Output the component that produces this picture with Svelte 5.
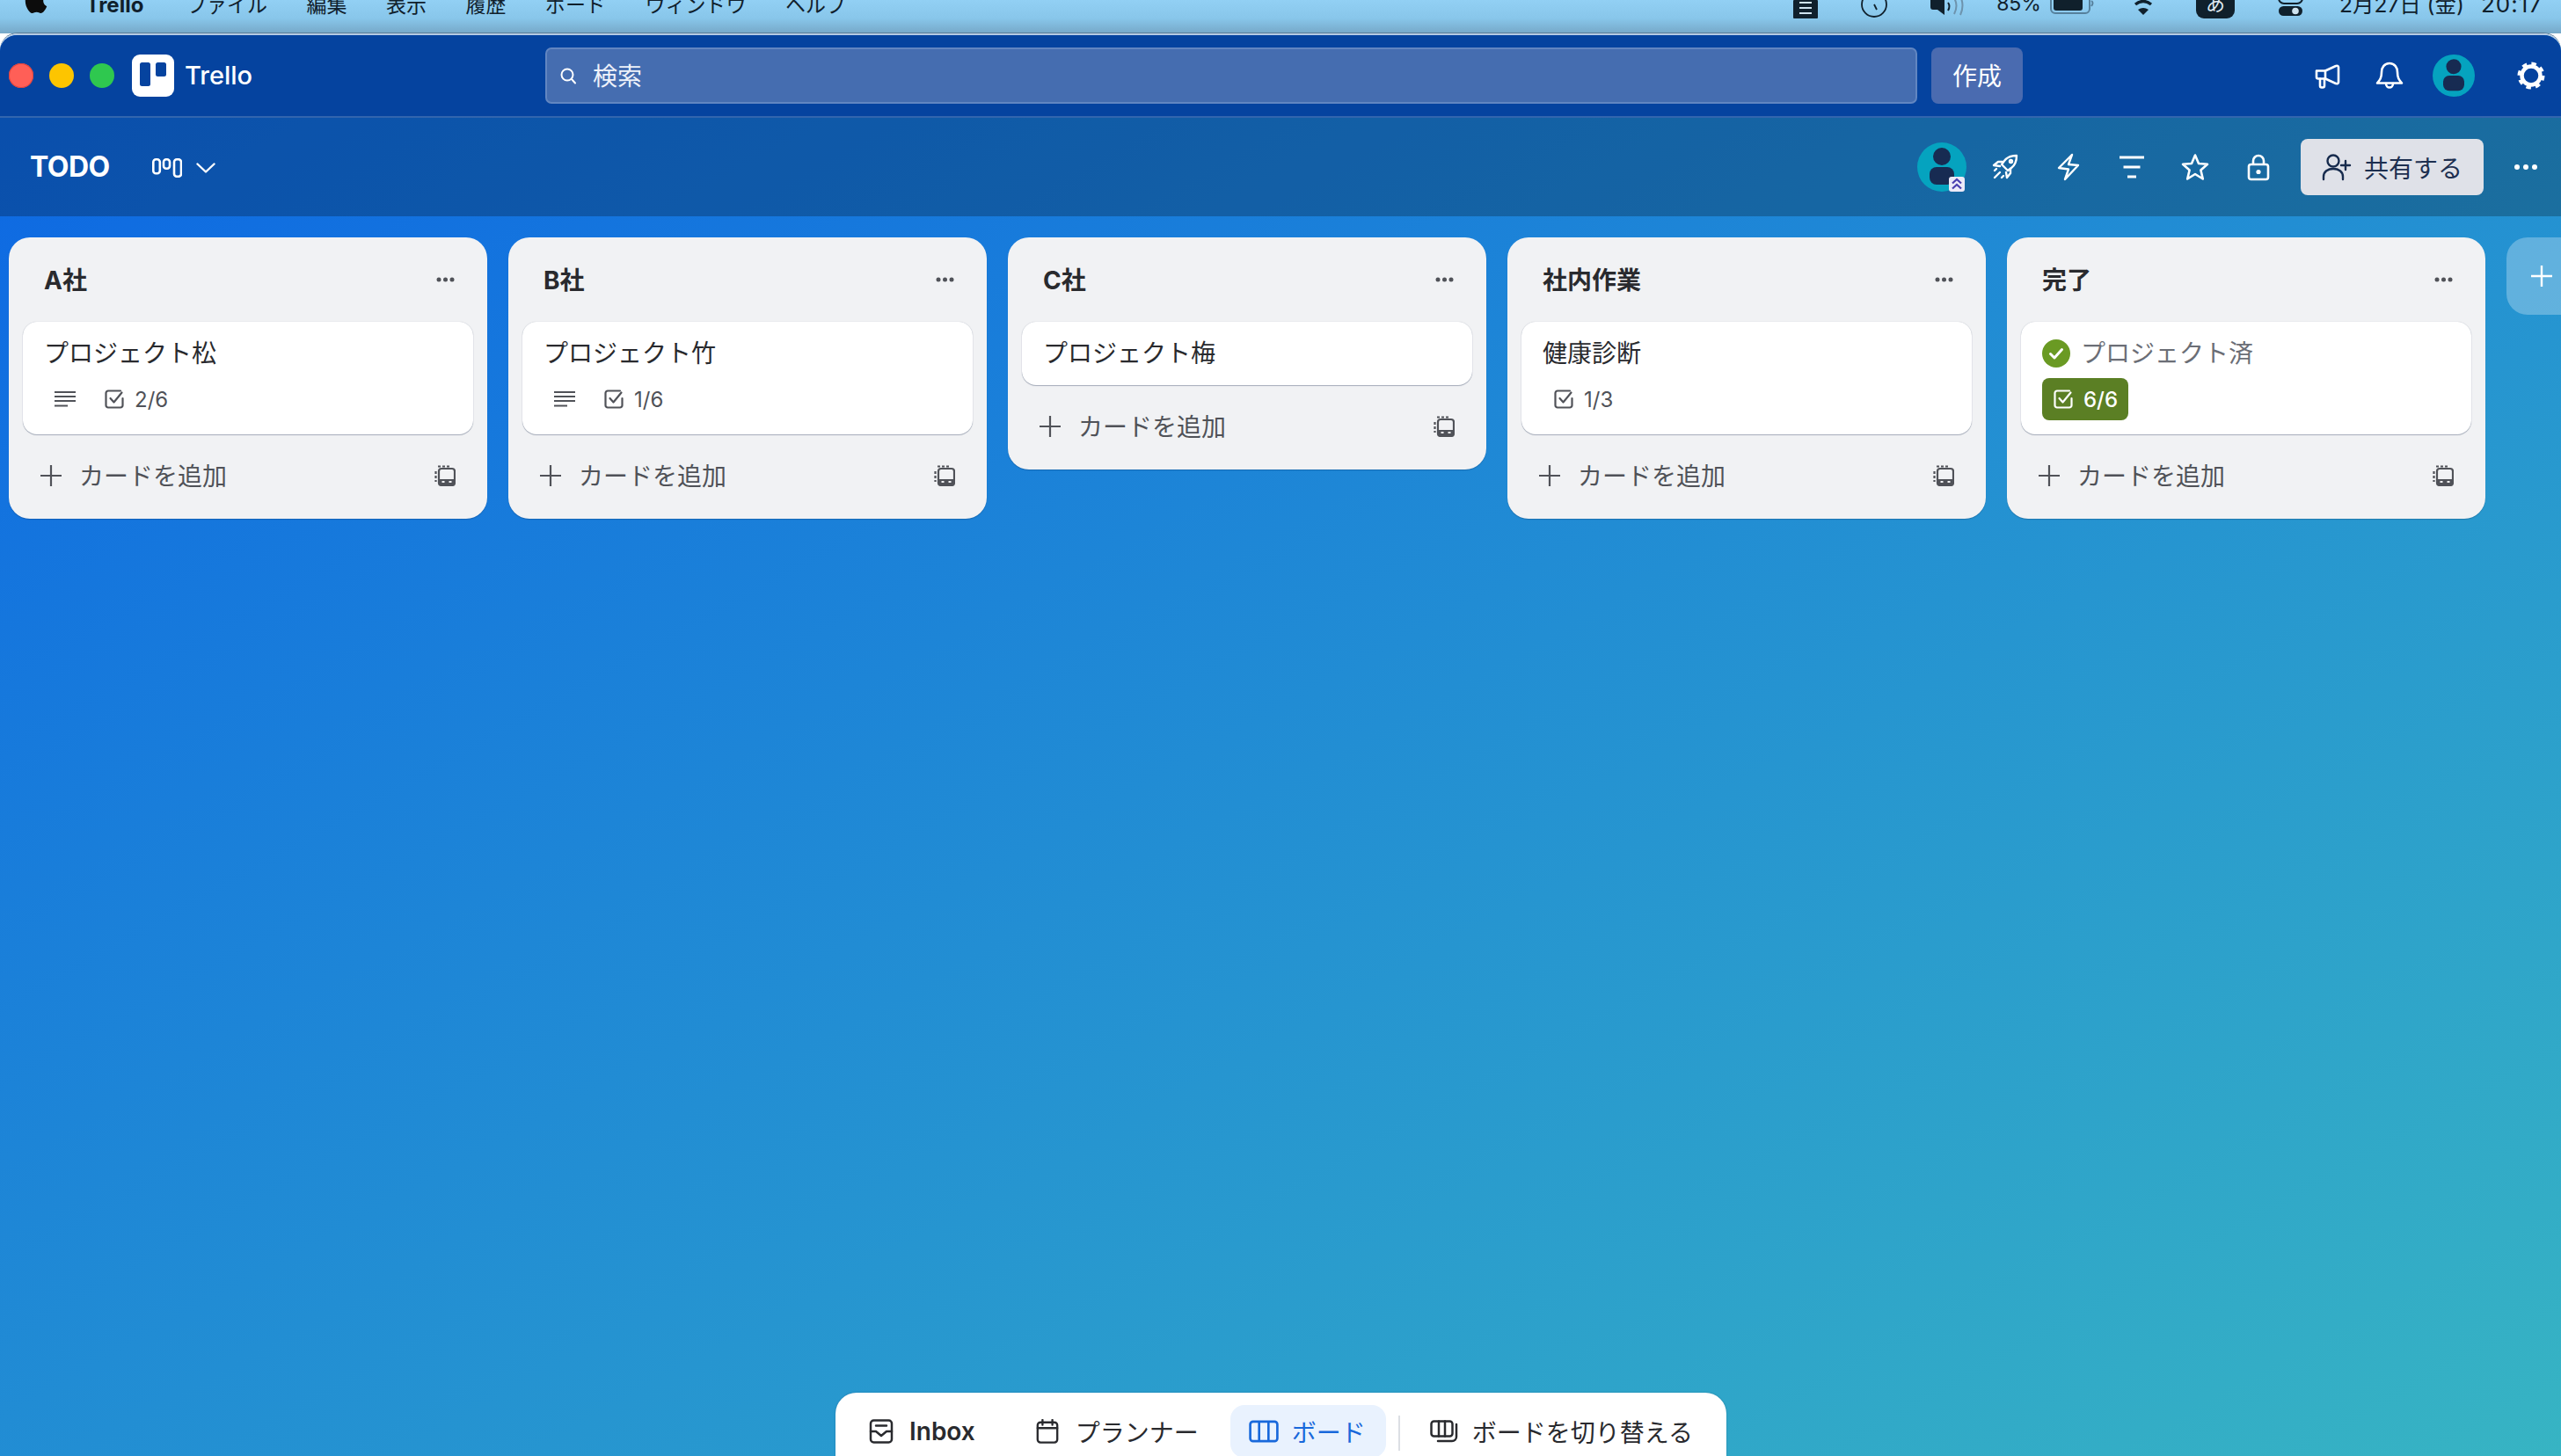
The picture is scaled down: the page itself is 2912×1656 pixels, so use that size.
<script>
  const lists = [
    { name: 'A社', cards: [{ title: 'プロジェクト松', desc: true, check: '2/6' }] },
    { name: 'B社', cards: [{ title: 'プロジェクト竹', desc: true, check: '1/6' }] },
    { name: 'C社', cards: [{ title: 'プロジェクト梅' }] },
    { name: '社内作業', cards: [{ title: '健康診断', check: '1/3' }] },
    { name: '完了', cards: [{ title: 'プロジェクト済', done: true, check: '6/6' }] }
  ];
  const menus = ['ファイル', '編集', '表示', '履歴', 'ボード', 'ウィンドウ', 'ヘルプ'];
</script>

{#snippet checkIcon()}
  <svg class="i24" viewBox="0 0 24 24" fill="none" stroke="currentColor" stroke-width="2.2" stroke-linecap="round" stroke-linejoin="round">
    <path d="M19 2.5H5A2.5 2.5 0 0 0 2.5 5v14A2.5 2.5 0 0 0 5 21.5h14a2.5 2.5 0 0 0 2.5-2.5v-8" />
    <path d="M7.5 11l4 4.5 9-11" />
  </svg>
{/snippet}

{#snippet person(size)}
  <svg class="avatar-svg" width={size} height={size} viewBox="0 0 56 56">
    <circle cx="28" cy="28" r="28" fill="#05a3bf" />
    <circle cx="28" cy="16" r="10" fill="#172b52" />
    <rect x="14" y="28" width="28" height="20" rx="8" fill="#172b52" />
  </svg>
{/snippet}

<div class="desk">
  <header class="menubar">
    <svg class="apple" viewBox="0 0 24 24" fill="#0c0c0c"><path d="M12.152 6.896c-.948 0-2.415-1.078-3.96-1.04-2.04.027-3.91 1.183-4.961 3.014-2.117 3.675-.546 9.103 1.519 12.09 1.013 1.454 2.208 3.09 3.792 3.039 1.52-.065 2.09-.987 3.935-.987 1.831 0 2.35.987 3.96.948 1.637-.026 2.676-1.48 3.676-2.948 1.156-1.688 1.636-3.325 1.662-3.415-.039-.013-3.182-1.221-3.22-4.857-.026-3.04 2.48-4.494 2.597-4.559-1.429-2.09-3.623-2.324-4.39-2.376-2-.156-3.675 1.09-4.61 1.09zM15.53 3.83c.843-1.012 1.4-2.427 1.245-3.83-1.207.052-2.662.805-3.532 1.818-.78.896-1.454 2.338-1.273 3.714 1.338.104 2.715-.688 3.559-1.701" /></svg>
    <span class="menu-app">Trello</span>
    {#each menus as m}<span class="menu-item">{m}</span>{/each}

    <div class="status">
      <svg class="st st-note" width="28" height="22" viewBox="0 0 28 22"><rect width="28" height="21" rx="1" fill="#10202c" /><path d="M7 3h14M7 9h14M7 15h14" stroke="#cfe3ef" stroke-width="2" /></svg>
      <svg class="st st-clock" width="30" height="22" viewBox="0 0 30 22" fill="none" stroke="#10202c" stroke-width="1.8"><circle cx="15" cy="5" r="14" /><path d="M15 5l3 6" /></svg>
      <svg class="st st-vol" width="39" height="22" viewBox="0 0 39 22" fill="none"><path d="M0 -4h8l8-6v27l-8-6H3a3 3 0 0 1-3-3z" fill="#10202c" /><path d="M20 3q3 4 0 9" stroke="#10202c" stroke-width="2" /><path d="M27 -2q5 8 0 18M34 -4q5 10 0 21" stroke="#6d93ad" stroke-width="2" /></svg>
      <span class="st-text st-pct">85%</span>
      <svg class="st st-batt" width="50" height="22" viewBox="0 0 50 22"><rect x="1" y="-10" width="44" height="25" rx="5" fill="none" stroke="#56809c" stroke-width="2" /><rect x="4" y="-8" width="33" height="20" rx="3" fill="#10202c" /><path d="M47 1q3 2 0 6" stroke="#56809c" stroke-width="2" fill="none" /></svg>
      <svg class="st st-wifi" width="34" height="22" viewBox="0 0 34 22" fill="none" stroke="#10202c" stroke-width="3.4"><path d="M1 -3q16-12 32 0M8 5q9-7 18 0" /><path d="M17 17l-6-6q6-4 12 0z" fill="#10202c" stroke="none" /></svg>
      <span class="st-ime">あ</span>
      <svg class="st st-toggle" width="27" height="22" viewBox="0 0 27 22"><rect y="-8" width="27" height="12" rx="6" fill="none" stroke="#10202c" stroke-width="2" /><rect y="7" width="27" height="11" rx="5.5" fill="#10202c" /><circle cx="19" cy="12.5" r="3.8" fill="#cfe3ef" /></svg>
      <span class="st-text st-date">2月27日 (金)</span>
      <span class="st-text st-time">20:17</span>
    </div>
  </header>

  <div class="window">
    <div class="titlebar">
      <div class="tb-left">
        <div class="lights">
          <span class="light red"></span><span class="light yellow"></span><span class="light green"></span>
        </div>
        <svg class="logo" viewBox="0 0 48 48"><rect width="48" height="48" rx="9" fill="#fff" /><rect x="9" y="9" width="12" height="27" rx="2.5" fill="#05439f" /><rect x="27" y="9" width="12" height="16" rx="2.5" fill="#05439f" /></svg>
        <span class="appname">Trello</span>
      </div>
      <div class="search">
        <svg class="i20" viewBox="0 0 20 20" fill="none" stroke="#fff" stroke-width="2" stroke-linecap="round"><circle cx="9" cy="9" r="6.5" /><path d="M14 14l4 4.5" /></svg>
        <span class="search-text">検索</span>
      </div>
      <button class="create"><span class="search-text">作成</span></button>
      <div class="tb-right">
        <svg class="ico" viewBox="0 0 32 32" fill="none" stroke="#fff" stroke-width="2.6" stroke-linejoin="round" stroke-linecap="round"><path d="M4 10.5h10L26 5a2 2 0 0 1 3 1.5v17a2 2 0 0 1-3 1.5l-12-5.5H6a2 2 0 0 1-2-2z" /><path d="M14 10.5v9M8 19.500v8a2 2 0 0 0 2 2h1a2 2 0 0 0 2-2v-8" /></svg>
        <svg class="ico" viewBox="0 0 32 32" fill="none" stroke="#fff" stroke-width="2.6" stroke-linejoin="round" stroke-linecap="round"><path d="M16 2c-6 0-9 5-9 10 0 7-2 9-5 12.500h28C27 21 25 19 25 12c0-5-3-10-9-10z" /><path d="M12 25c0 6 8 6 8 0" /></svg>
        <span class="tb-avatar">{@render person(48)}</span>
        <svg class="ico gear" viewBox="0 0 32 32" fill="none" stroke="#fff"><circle cx="16" cy="16" r="10.500" stroke-width="4.500" /><circle cx="16" cy="16" r="13.500" stroke-width="4" stroke-dasharray="5.400 5.200" /></svg>
      </div>
    </div>

    <div class="boardbar">
      <h1 class="board-title">TODO</h1>
      <svg class="view-ico" viewBox="0 0 34 22" fill="none" stroke="#fff" stroke-width="2.6"><rect x="1.300" y="1.300" width="7.500" height="16" rx="3" /><rect x="13" y="1.300" width="7" height="10.500" rx="3" /><rect x="25" y="1.300" width="8" height="19.500" rx="3" /></svg>
      <svg class="chev" viewBox="0 0 22 12" fill="none" stroke="#fff" stroke-width="2.400" stroke-linecap="round" stroke-linejoin="round"><path d="M1.500 1.500L11 10.500l9.500-9" /></svg>

      <div class="board-right">
        <span class="member">
          {@render person(56)}
          <span class="member-badge">
            <svg viewBox="0 0 18 17" fill="none" stroke="#4a3fb0" stroke-width="2.200"><path d="M4 7.500L9 3l5 4.500M4 13.500L9 9l5 4.500" /></svg>
          </span>
        </span>
        <svg class="ico" viewBox="0 0 32 32" fill="none" stroke="#fff" stroke-width="2.400" stroke-linejoin="round" stroke-linecap="round"><path d="M29 3c-6 0-11 2-14 6l-3 4 7 7 4-3c4-3 6-8 6-14z" /><path d="M13 10H8l-5 4 7 1M22 18v5l-4 5-1-6" /><circle cx="22.500" cy="9.500" r="1.500" /><path d="M10 22l-6 6M6 18l-2 2M14 26l-2 2" /></svg>
        <svg class="ico" viewBox="0 0 32 32" fill="none" stroke="#fff" stroke-width="2.400" stroke-linejoin="round" stroke-linecap="round"><path d="M20 2L5 17l11 1.500L12 30l15-16-11-1z" /></svg>
        <svg class="ico" viewBox="0 0 32 32" fill="none" stroke="#fff" stroke-width="2.800"><path d="M2 5h28M6.500 16h19M11 27h10" /></svg>
        <svg class="ico" viewBox="0 0 32 32" fill="none" stroke="#fff" stroke-width="2.600" stroke-linejoin="round"><path d="M16 2.500l4 9.500 10 .8-7.600 6.700 2.400 10L16 24l-8.800 5.500 2.400-10L2 12.800l10-.8z" /></svg>
        <svg class="ico" viewBox="0 0 32 32" fill="none" stroke="#fff" stroke-width="2.600" stroke-linejoin="round"><rect x="5" y="13" width="22" height="17" rx="2.500" /><path d="M10 13V9a6 6 0 0 1 12 0v4" /><circle cx="16" cy="21.500" r="2.600" fill="#fff" stroke="none" /></svg>
        <button class="share">
          <svg class="share-ico" viewBox="0 0 34 32" fill="none" stroke="#172b4d" stroke-width="2.400" stroke-linecap="round"><circle cx="13" cy="9" r="6.500" /><path d="M2 30v-3c0-6 5-9 11-9s11 3 11 9v3" /><path d="M27 9v10M22 14h10" /></svg>
          <span>共有する</span>
        </button>
        <svg class="ico" viewBox="0 0 32 32" fill="#fff"><circle cx="6" cy="16" r="3" /><circle cx="16" cy="16" r="3" /><circle cx="26" cy="16" r="3" /></svg>
      </div>
    </div>

    <main class="canvas">
      {#each lists as list}
        <section class="list">
          <div class="list-head">
            <h2>{list.name}</h2>
            <svg class="i24" viewBox="0 0 24 24" fill="#505258"><circle cx="5" cy="12" r="2.500" /><circle cx="12.500" cy="12" r="2.500" /><circle cx="20" cy="12" r="2.500" /></svg>
          </div>
          {#each list.cards as card}
            <article class="card">
              <div class="card-title" class:done={card.done}>
                {#if card.done}
                  <svg class="done-ico" viewBox="0 0 32 32"><circle cx="16" cy="16" r="16" fill="#6a9a23" /><path d="M9.500 16.500l4.500 4.500 8.500-9.500" fill="none" stroke="#fff" stroke-width="3" stroke-linecap="round" stroke-linejoin="round" /></svg>
                {/if}
                <span>{card.title}</span>
              </div>
              {#if card.check}
                <div class="badges">
                  {#if card.desc}
                    <svg class="i24 lines" viewBox="0 0 24 24" fill="none" stroke="currentColor" stroke-width="2"><path d="M0 4h24M0 9h24M0 14h24M0 19.500h15" /></svg>
                  {/if}
                  <span class="badge" class:complete={card.done} class:first={!card.desc && !card.done}>
                    {@render checkIcon()}
                    <span>{card.check}</span>
                  </span>
                </div>
              {/if}
            </article>
          {/each}
          <div class="add-row">
            <svg class="i24" viewBox="0 0 24 24" fill="none" stroke="#505258" stroke-width="2.200"><path d="M12 0v24M0 12h24" /></svg>
            <span class="add-text">カードを追加</span>
            <svg class="i24" viewBox="0 0 24 24" fill="none" stroke="#505258" stroke-width="2.200">
              <path d="M1.500 7v12M4 1.500h13" stroke-dasharray="3 2" />
              <rect x="5" y="4" width="18" height="19" rx="3" />
              <path d="M6 16h16v6H6z" fill="#505258" stroke="none" />
              <path d="M8.500 19h3M16.500 19h3" stroke="#f1f2f4" stroke-width="2" />
            </svg>
          </div>
        </section>
      {/each}
      <button class="add-list" aria-label="リストを追加">
        <svg class="i24" viewBox="0 0 24 24" fill="none" stroke="#fff" stroke-width="2.400"><path d="M12 0v24M0 12h24" /></svg>
      </button>

      <nav class="dock">
        <a class="dock-item first-item">
          <svg class="d28" viewBox="0 0 28 28" fill="none" stroke="#292a2e" stroke-width="2.500" stroke-linejoin="round" stroke-linecap="round"><rect x="2" y="1.500" width="24" height="25" rx="3.500" /><path d="M8 7.500h12M2 14h6l6 5 6-5h6" /></svg>
          <span class="strong">Inbox</span>
        </a>
        <a class="dock-item planner">
          <svg class="d28" viewBox="0 0 28 30" fill="none" stroke="#292a2e" stroke-width="2.500" stroke-linejoin="round" stroke-linecap="round"><rect x="2" y="4" width="24" height="24.500" rx="3.500" /><path d="M8 1v6M20 1v6M2 11h24" /></svg>
          <span>プランナー</span>
        </a>
        <a class="dock-item active">
          <svg class="d32" viewBox="0 0 32 24" fill="none" stroke="#1868db" stroke-width="2.500" stroke-linejoin="round"><rect x="1.500" y="1.500" width="29" height="21" rx="3" /><path d="M11 1.500v21M21 1.500v21" /></svg>
          <span>ボード</span>
        </a>
        <span class="dock-sep"></span>
        <a class="dock-item switcher">
          <svg class="d32" viewBox="0 0 32 26" fill="none" stroke="#292a2e" stroke-width="2.500" stroke-linejoin="round" stroke-linecap="round"><rect x="1.500" y="1.500" width="24" height="17" rx="3" /><path d="M10 1.500v17M17 1.500v17M30 5v14a5 5 0 0 1-5 5H9" /></svg>
          <span>ボードを切り替える</span>
        </a>
      </nav>
    </main>
  </div>
</div>

<style>
  :global(body) {
    margin: 0;
    overflow: hidden;
  }
  .desk {
    width: 2912px;
    height: 1656px;
    display: flex;
    flex-direction: column;
    overflow: hidden;
    font-family: Inter, "Noto Sans CJK JP", sans-serif;
    color: #292a2e;
  }
  h1, h2 { margin: 0; }
  button { font: inherit; border: 0; cursor: pointer; }
  svg { display: block; flex-shrink: 0; }
  .i24 { width: 24px; height: 24px; }
  .i20 { width: 20px; height: 20px; }
  .d28 { width: 28px; height: 28px; }
  .d32 { width: 34px; height: 26px; }
  .ico { width: 32px; height: 32px; padding: 0 6px; box-sizing: content-box; }

  /* macOS menu bar (its top is cut off in the capture) */
  .menubar {
    height: 38px;
    flex-shrink: 0;
    display: flex;
    align-items: flex-start;
    padding-left: 27px;
    gap: 44.5px;
    overflow: hidden;
    font-size: 24px;
    line-height: 30px;
    color: #10202c;
    background: linear-gradient(180deg, #92d0f4 0%, #88c6ea 55%, #76a8c8 100%);
  }
  .apple {
    width: 30px;
    height: 34px;
    margin-top: -17px;
    margin-left: -1px;
  }
  .menu-app {
    font-weight: 700;
    margin-top: -9px;
    margin-right: 4px;
    margin-left: -3px;
  }
  .menu-item { margin-top: -9px; font-size: 23px; white-space: nowrap; }
  .status {
    margin-left: auto;
    display: flex;
    align-items: flex-start;
    padding-right: 21px;
    overflow: visible;
    height: 22px;
  }
  .st { overflow: visible; }
  .st-clock, .st-vol { margin-left: 49px; }
  .st-text { margin-top: -10px; white-space: nowrap; }
  .st-pct { margin-left: 36px; font-size: 23px; margin-top: -11px; }
  .st-batt { margin-left: 10px; }
  .st-wifi { margin-left: 39px; }
  .st-ime {
    margin-left: 43px;
    width: 44px;
    height: 32px;
    margin-top: -11px;
    background: #10202c;
    color: #dfeaf2;
    border-radius: 0 0 9px 9px;
    text-align: center;
    font-size: 22px;
    line-height: 30px;
  }
  .st-toggle { margin-left: 50px; }
  .st-date { margin-left: 42px; font-size: 24.5px; }
  .st-time { margin-left: 19px; font-size: 26px; letter-spacing: 1px; }

  /* Window */
  .window {
    flex: 1;
    min-height: 0;
    display: flex;
    flex-direction: column;
    border-radius: 20px 20px 0 0;
    overflow: hidden;
    border-top: 2px solid #b5cbe4;
    box-shadow: 0 -1px 0 #5c7d97;
    background: linear-gradient(to bottom right, #0c66e4, #37b4c3);
  }
  .titlebar {
    height: 92px;
    flex-shrink: 0;
    display: flex;
    align-items: center;
    background: #05439f;
    border-bottom: 2px solid #3265ae;
  }
  .tb-left {
    width: 620px;
    flex-shrink: 0;
    display: flex;
    align-items: center;
    padding-left: 10px;
    box-sizing: border-box;
  }
  .lights { display: flex; gap: 18px; }
  .light { width: 28px; height: 28px; border-radius: 50%; }
  .red { background: #ff5f57; box-shadow: inset 0 0 0 1px #e0443e; }
  .yellow { background: #fdc500; }
  .green { background: #2fc84f; }
  .logo { width: 48px; height: 48px; margin-left: 20px; }
  .appname { margin-left: 12px; color: #fff; font-size: 29px; font-weight: 500; margin-top: -2px; }
  .search {
    flex: 1;
    height: 64px;
    box-sizing: border-box;
    display: flex;
    align-items: center;
    gap: 18px;
    padding-left: 14px;
    background: #456db0;
    border: 2px solid #6286c1;
    border-radius: 7px;
    color: #eef2fa;
    font-size: 28px;
  }
  .search-text { display: block; margin-top: -2px; }
  .create {
    width: 104px;
    height: 64px;
    margin-left: 16px;
    background: #4a6bb0;
    color: #fff;
    border-radius: 8px;
    font-size: 28px;
  }
  .tb-right {
    width: 612px;
    flex-shrink: 0;
    box-sizing: border-box;
    display: flex;
    align-items: center;
    justify-content: flex-end;
    gap: 27px;
    padding-right: 12px;
  }
  .tb-avatar { display: block; }
  .gear { margin-left: 15px; }

  .boardbar {
    height: 112px;
    flex-shrink: 0;
    display: flex;
    align-items: center;
    padding-left: 34px;
    background: rgba(0, 0, 0, 0.24);
  }
  .board-title {
    font-size: 32px;
    font-weight: 700;
    color: #fff;
    letter-spacing: -0.5px;
    margin-bottom: 1px;
  }
  .view-ico { width: 34px; height: 22px; margin-left: 48px; margin-top: 2px; }
  .chev { width: 22px; height: 12px; margin-left: 16px; margin-top: 2px; }
  .board-right {
    margin-left: auto;
    display: flex;
    align-items: center;
    gap: 28px;
    padding-right: 18px;
  }
  .member { position: relative; display: block; margin-right: -6px; }
  .member-badge {
    position: absolute;
    right: 2px;
    bottom: 0;
    width: 18px;
    height: 17px;
    background: #eceaf8;
    border-radius: 3px;
  }
  .share {
    height: 64px;
    width: 208px;
    display: flex;
    align-items: center;
    gap: 14px;
    padding: 0 0 0 24px;
    box-sizing: border-box;
    background: #dfe1e8;
    color: #1d2f50;
    border-radius: 8px;
    font-size: 28px;
    margin-left: -2px;
    margin-right: -2px;
  }
  .share-ico { width: 34px; height: 32px; }

  /* Board canvas */
  .canvas {
    flex: 1;
    min-height: 0;
    position: relative;
    display: flex;
    align-items: flex-start;
    gap: 24px;
    padding: 24px 0 0 10px;
  }
  .list {
    width: 544px;
    flex-shrink: 0;
    box-sizing: border-box;
    padding: 0 16px 21px;
    background: #f1f2f4;
    border-radius: 24px;
    box-shadow: 0 1px 1px rgba(9, 30, 66, 0.25);
  }
  .list-head {
    height: 96px;
    display: flex;
    align-items: center;
    justify-content: space-between;
    padding: 0 20px 0 24px;
  }
  .list-head h2 {
    font-size: 28px;
    font-weight: 700;
    color: #292a2e;
    margin-top: -3px;
  }
  .card {
    background: #fff;
    border-radius: 16px;
    padding: 16px 24px 16px;
    box-shadow: 0 1px 1px rgba(9, 30, 66, 0.3), 0 0 1px rgba(9, 30, 66, 0.31);
  }
  .card-title {
    font-size: 28px;
    line-height: 40px;
    display: flex;
    align-items: center;
    gap: 12px;
    color: #292a2e;
  }
  .card-title.done { color: #6b6e76; }
  .done-ico { width: 32px; height: 32px; }
  .badges {
    display: flex;
    align-items: center;
    height: 48px;
    margin: 8px 0 0;
    color: #505258;
    font-size: 24px;
  }
  .lines { margin-left: 12px; }
  .badge {
    display: inline-flex;
    align-items: center;
    gap: 11px;
    margin-left: 32px;
  }
  .badge.first { margin-left: 12px; }
  .badge.complete {
    margin-left: 0;
    height: 48px;
    padding: 0 12px;
    background: #5b7f24;
    color: #fff;
    border-radius: 8px;
    font-weight: 500;
  }
  .add-row {
    height: 56px;
    margin-top: 19px;
    display: flex;
    align-items: center;
    padding: 0 20px;
    gap: 20px;
    font-size: 28px;
    color: #505258;
  }
  .add-text { flex: 1; margin-top: -2px; }
  .add-list {
    width: 120px;
    height: 88px;
    flex-shrink: 0;
    padding: 0 0 0 28px;
    background: rgba(255, 255, 255, 0.28);
    border-radius: 24px 0 0 24px;
    display: flex;
    align-items: center;
  }

  /* Bottom dock floats over the board */
  .dock {
    position: absolute;
    left: 950px;
    bottom: 0;
    width: 1013px;
    height: 72px;
    box-sizing: border-box;
    padding-top: 14px;
    background: #fff;
    border-radius: 24px 24px 0 0;
    box-shadow: 0 0 2px rgba(9, 30, 66, 0.3);
    display: flex;
    align-items: flex-start;
    gap: 14px;
    font-size: 28px;
    color: #292a2e;
    overflow: hidden;
  }
  .dock-item {
    height: 60px;
    display: flex;
    align-items: center;
    gap: 18px;
    padding: 0 24px;
    white-space: nowrap;
    flex-shrink: 0;
  }
  .first-item { margin-left: 14px; }
  .planner { margin-left: 6px; margin-right: -2px; }
  .strong { font-weight: 600; }
  .active {
    background: #e9f2fe;
    color: #1868db;
    border-radius: 16px;
    gap: 15px;
    padding: 0 23px 0 21px;
  }
  .switcher { padding: 0 0 0 19px; gap: 15px; }
  .dock-sep {
    width: 2px;
    height: 40px;
    margin-top: 12px;
    background: #dcdfe4;
    flex-shrink: 0;
  }
</style>
